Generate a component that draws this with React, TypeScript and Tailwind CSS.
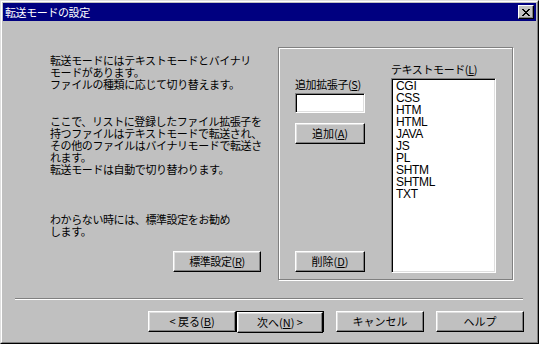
import type { ReactNode } from 'react';

/* Win95-style "転送モードの設定" wizard page */

const EXTENSIONS = ['CGI', 'CSS', 'HTM', 'HTML', 'JAVA', 'JS', 'PL', 'SHTM', 'SHTML', 'TXT'];

const U = ({ children }: { children: ReactNode }) => (
    <span className="underline underline-offset-[1px]">{children}</span>
);

const Btn = ({ children, className = '' }: { children: ReactNode; className?: string }) => (
    <div
        className={`flex items-center justify-center h-[21px] bg-[#c0c0c0] border border-t-white border-l-white border-r-black border-b-black shadow-[inset_-1px_-1px_0_#808080,inset_1px_1px_0_#dfdfdf] leading-none whitespace-nowrap ${className}`}
    >
        {children}
    </div>
);

const CloseGlyph = () => (
    <svg width="8" height="7" viewBox="0 0 8 7" shapeRendering="crispEdges">
        {[
            [0, 0], [1, 0], [6, 0], [7, 0],
            [1, 1], [2, 1], [5, 1], [6, 1],
            [2, 2], [3, 2], [4, 2], [5, 2],
            [3, 3], [4, 3],
            [2, 4], [3, 4], [4, 4], [5, 4],
            [1, 5], [2, 5], [5, 5], [6, 5],
            [0, 6], [1, 6], [6, 6], [7, 6],
        ].map(([x, y]) => (
            <rect key={`${x}-${y}`} x={x} y={y} width="1" height="1" fill="#000" />
        ))}
    </svg>
);

export default function App() {
    return (
        <div className="w-[539px] h-[344px] bg-[#c0c0c0] border border-t-[#dfdfdf] border-l-[#dfdfdf] border-r-black border-b-black font-['Noto_Sans_CJK_JP','Noto_Sans_CJK_SC',sans-serif] text-[11px] text-black">
            <div className="h-full flex flex-col border border-t-white border-l-white border-r-[#808080] border-b-[#808080] p-px">
                {/* Title bar */}
                <div className="h-[18px] bg-[#000080] flex items-center justify-between pl-[2px] pr-[2px]">
                    <span className="text-white leading-none tracking-[-0.4px]">転送モードの設定</span>
                    <div className="w-[16px] h-[14px] flex items-center justify-center bg-[#c0c0c0] border border-t-white border-l-white border-r-black border-b-black shadow-[inset_-1px_-1px_0_#808080]">
                        <CloseGlyph />
                    </div>
                </div>

                {/* Body */}
                <div className="flex pt-[26px]">
                    {/* Explanation */}
                    <div className="w-[275px] pl-[47px] pt-[7px] flex flex-col leading-[12px] tracking-[-0.4px] whitespace-nowrap">
                        <p>
                            転送モードにはテキストモードとバイナリ<br />
                            モードがあります。<br />
                            ファイルの種類に応じて切り替えます。
                        </p>
                        <p className="mt-[25px]">
                            ここで、リストに登録したファイル拡張子を<br />
                            持つファイルはテキストモードで転送され、<br />
                            その他のファイルはバイナリモードで転送さ<br />
                            れます。<br />
                            転送モードは自動で切り替わります。
                        </p>
                        <p className="mt-[38px]">
                            わからない時には、標準設定をお勧め<br />
                            します。
                        </p>
                        <Btn className="mt-[14px] ml-[123px] w-[88px]">
                            標準設定(<U>R</U>)
                        </Btn>
                    </div>

                    {/* Group box */}
                    <div className="w-[235px] h-[233px] flex border border-[#808080] shadow-[inset_1px_1px_0_#fff,1px_1px_0_#fff]">
                        <div className="w-[86px] pl-[16px] pt-[30px] flex flex-col">
                            <span className="h-[12px] leading-[12px] whitespace-nowrap tracking-[-0.4px]">
                                追加拡張子(<U>S</U>)
                            </span>
                            <div className="mt-[3px] w-[70px] h-[20px] bg-white border border-t-[#808080] border-l-[#808080] border-r-white border-b-white shadow-[inset_1px_1px_0_#000,inset_-1px_-1px_0_#dfdfdf]" />
                            <Btn className="mt-[10px] w-[70px]">
                                追加(<U>A</U>)
                            </Btn>
                            <Btn className="mt-[107px] w-[70px]">
                                削除(<U>D</U>)
                            </Btn>
                        </div>
                        <div className="ml-[26px] pt-[15px] flex flex-col">
                            <span className="h-[12px] leading-[12px] whitespace-nowrap tracking-[-0.4px]">
                                テキストモード(<U>L</U>)
                            </span>
                            <div className="mt-[3px] w-[105px] h-[195px] bg-white border border-t-[#808080] border-l-[#808080] border-r-white border-b-white shadow-[inset_1px_1px_0_#000,inset_-1px_-1px_0_#dfdfdf] p-px">
                                <ul className="pl-[3px] font-['Liberation_Sans',Arial,sans-serif] text-[12px] leading-[12px] tracking-[-0.3px]">
                                    {EXTENSIONS.map((ext) => (
                                        <li key={ext}>{ext}</li>
                                    ))}
                                </ul>
                            </div>
                        </div>
                    </div>
                </div>

                {/* Separator */}
                <div className="mt-[18px] ml-[12px] w-[508px] h-[2px] border-t border-t-[#808080] border-b border-b-white" />

                {/* Wizard buttons */}
                <div className="mt-[11px] pl-[145px] flex">
                    <Btn className="w-[88px]">
                        &lt; 戻る(<U>B</U>)
                    </Btn>
                    <div className="w-[88px] h-[21px] border border-black flex">
                        <Btn className="w-full h-[19px]">
                            次へ(<U>N</U>) &gt;
                        </Btn>
                    </div>
                    <Btn className="ml-[12px] w-[88px]">キャンセル</Btn>
                    <Btn className="ml-[12px] w-[88px]">ヘルプ</Btn>
                </div>
            </div>
        </div>
    );
}
